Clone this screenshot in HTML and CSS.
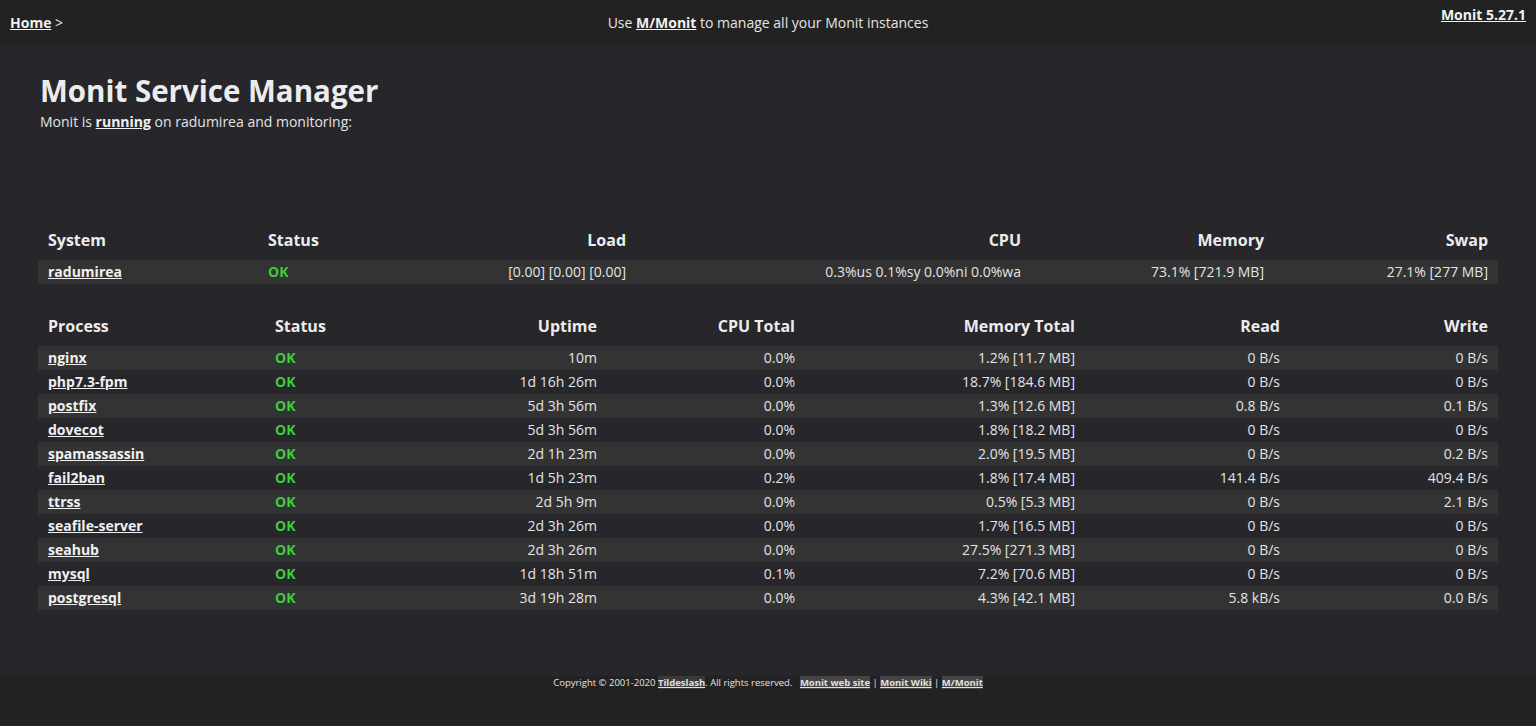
FILE: index.html
```html
<!DOCTYPE html>
<html>
<head>
<meta charset="utf-8">
<title>Monit: radumirea</title>
<link rel="stylesheet" href="styles.css">
</head>
<body>
<header class="topbar">
  <div class="crumb"><a href="#">Home</a> &gt;</div>
  <div class="promo">Use <a href="#">M/Monit</a> to manage all your Monit instances</div>
  <div class="version"><a href="#">Monit 5.27.1</a></div>
</header>
<main class="content">
  <h1 class="title">Monit Service Manager</h1>
  <p class="subtitle">Monit is <a href="#">running</a> on radumirea and monitoring:</p>

  <table class="grid sys">
    <colgroup>
      <col class="c220"><col class="c142"><col class="c236"><col class="c395"><col class="c243"><col class="c224">
    </colgroup>
    <thead>
      <tr><th class="l">System</th><th class="l">Status</th><th>Load</th><th>CPU</th><th>Memory</th><th>Swap</th></tr>
    </thead>
    <tbody>
      <tr><td class="l"><a href="#">radumirea</a></td><td class="l ok">OK</td><td>[0.00]&nbsp;[0.00]&nbsp;[0.00]</td><td>0.3%us&nbsp;0.1%sy&nbsp;0.0%ni&nbsp;0.0%wa</td><td>73.1% [721.9 MB]</td><td>27.1% [277 MB]</td></tr>
    </tbody>
  </table>

  <table class="grid proc">
    <colgroup>
      <col class="c227"><col class="c150"><col class="c192"><col class="c198"><col class="c280"><col class="c205"><col class="c208">
    </colgroup>
    <thead>
      <tr><th class="l">Process</th><th class="l">Status</th><th>Uptime</th><th>CPU Total</th><th>Memory Total</th><th>Read</th><th>Write</th></tr>
    </thead>
    <tbody>
      <tr><td class="l"><a href="#">nginx</a></td><td class="l ok">OK</td><td>10m</td><td>0.0%</td><td>1.2% [11.7 MB]</td><td>0 B/s</td><td>0 B/s</td></tr>
      <tr><td class="l"><a href="#">php7.3-fpm</a></td><td class="l ok">OK</td><td>1d 16h 26m</td><td>0.0%</td><td>18.7% [184.6 MB]</td><td>0 B/s</td><td>0 B/s</td></tr>
      <tr><td class="l"><a href="#">postfix</a></td><td class="l ok">OK</td><td>5d 3h 56m</td><td>0.0%</td><td>1.3% [12.6 MB]</td><td>0.8 B/s</td><td>0.1 B/s</td></tr>
      <tr><td class="l"><a href="#">dovecot</a></td><td class="l ok">OK</td><td>5d 3h 56m</td><td>0.0%</td><td>1.8% [18.2 MB]</td><td>0 B/s</td><td>0 B/s</td></tr>
      <tr><td class="l"><a href="#">spamassassin</a></td><td class="l ok">OK</td><td>2d 1h 23m</td><td>0.0%</td><td>2.0% [19.5 MB]</td><td>0 B/s</td><td>0.2 B/s</td></tr>
      <tr><td class="l"><a href="#">fail2ban</a></td><td class="l ok">OK</td><td>1d 5h 23m</td><td>0.2%</td><td>1.8% [17.4 MB]</td><td>141.4 B/s</td><td>409.4 B/s</td></tr>
      <tr><td class="l"><a href="#">ttrss</a></td><td class="l ok">OK</td><td>2d 5h 9m</td><td>0.0%</td><td>0.5% [5.3 MB]</td><td>0 B/s</td><td>2.1 B/s</td></tr>
      <tr><td class="l"><a href="#">seafile-server</a></td><td class="l ok">OK</td><td>2d 3h 26m</td><td>0.0%</td><td>1.7% [16.5 MB]</td><td>0 B/s</td><td>0 B/s</td></tr>
      <tr><td class="l"><a href="#">seahub</a></td><td class="l ok">OK</td><td>2d 3h 26m</td><td>0.0%</td><td>27.5% [271.3 MB]</td><td>0 B/s</td><td>0 B/s</td></tr>
      <tr><td class="l"><a href="#">mysql</a></td><td class="l ok">OK</td><td>1d 18h 51m</td><td>0.1%</td><td>7.2% [70.6 MB]</td><td>0 B/s</td><td>0 B/s</td></tr>
      <tr><td class="l"><a href="#">postgresql</a></td><td class="l ok">OK</td><td>3d 19h 28m</td><td>0.0%</td><td>4.3% [42.1 MB]</td><td>5.8 kB/s</td><td>0.0 B/s</td></tr>
    </tbody>
  </table>
</main>
<footer class="foot">
  Copyright &copy; 2001-2020 <a href="#" class="plain">Tildeslash</a>. All rights reserved.
  <span class="sep"></span><a href="#">Monit web site</a> | <a href="#">Monit Wiki</a> | <a href="#">M/Monit</a>
</footer>
</body>
</html>
```

FILE: styles.css
```css
html, body {
  margin: 0;
  padding: 0;
}
body {
  background: #26262b;
  color: #e4e4e4;
  font-family: "Open Sans", "Noto Sans", sans-serif;
  font-size: 14px;
}
a {
  color: #f0f0f0;
  font-weight: bold;
  text-decoration: underline;
}

.topbar {
  background: #222222;
  height: 44px;
  display: flex;
  align-items: flex-start;
  justify-content: space-between;
  padding: 0 10px;
  font-size: 14px;
}
.crumb {
  line-height: 46px;
}
.promo {
  line-height: 46px;
  margin-left: 32px;
}
.version {
  line-height: 30px;
}

.content {
  padding: 28px 38px 66px 38px;
}
.title {
  margin: 0 0 0 2px;
  font-size: 29.5px;
  line-height: 38px;
  font-weight: bold;
  color: #ececec;
}
.subtitle {
  margin: 0 0 0 2px;
  line-height: 24px;
  font-size: 14px;
}

.grid {
  width: 1460px;
  border-collapse: collapse;
  table-layout: fixed;
}
.sys { margin-top: 94px; }
.proc { margin-top: 30px; }
.grid th {
  font-size: 16px;
  font-weight: bold;
  color: #ececec;
  text-align: right;
  padding: 0 10px 8px 10px;
  line-height: 24px;
}
.grid td {
  text-align: right;
  padding: 0 10px;
  line-height: 24px;
  height: 24px;
  white-space: nowrap;
}
.grid th.l, .grid td.l { text-align: left; }
.grid tbody tr:nth-child(odd) { background: #333333; }
.ok { color: #3ccd3c; font-weight: bold; }

.c220 { width: 220px; }
.c142 { width: 142px; }
.c236 { width: 236px; }
.c395 { width: 395px; }
.c243 { width: 243px; }
.c224 { width: 224px; }
.c227 { width: 227px; }
.c150 { width: 150px; }
.c192 { width: 192px; }
.c198 { width: 198px; }
.c280 { width: 280px; }
.c205 { width: 205px; }
.c208 { width: 208px; }

.foot {
  background: #222222;
  height: 50px;
  text-align: center;
  font-size: 9.5px;
  line-height: 14px;
  color: #e4e4e4;
}
.foot a {
  background: #444444;
  color: #e0e0e0;
}
.foot a.plain {
  background: #3a3a3a;
}
.sep {
  display: inline-block;
  width: 5px;
}
```
